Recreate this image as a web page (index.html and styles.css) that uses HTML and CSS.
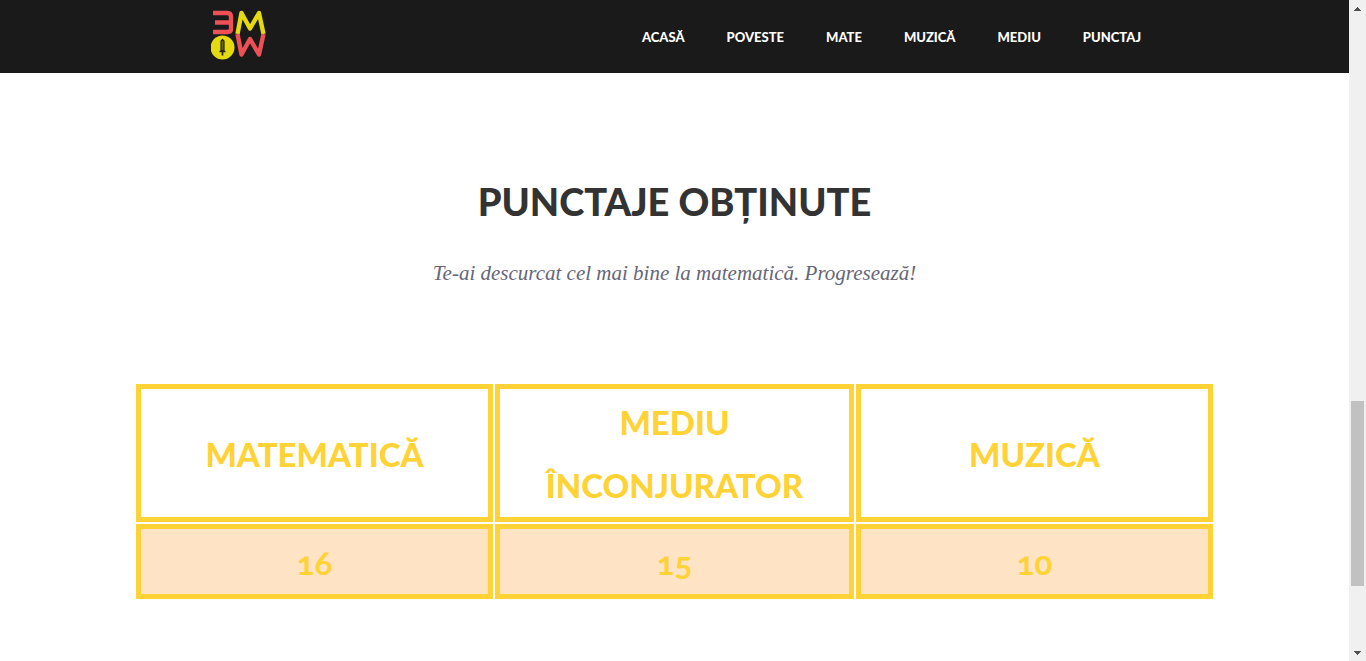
FILE: index.html
```html
<!DOCTYPE html>
<html lang="ro">
<head>
  <meta charset="utf-8">
  <meta name="viewport" content="width=device-width, initial-scale=1">
  <title>Punctaje obținute</title>
  <link rel="stylesheet" href="styles.css">
</head>
<body>
  <div class="page">
    <header class="header">
      <a class="logo" href="#acasa" aria-label="Acasă">
        <svg class="logo-mark" viewBox="0 0 56 56" aria-hidden="true">
          <g fill="none" stroke-linejoin="round" stroke-width="4.400">
            <path d="M2 5H16.500Q20 5 20 9V21Q20 24 16.500 24H2M4 14.500H20" stroke="#ed5055"/>
            <path d="M26.500 26L30.500 5L39 20.500L48 5L52.500 26" stroke="#e5d90f"/>
            <path d="M26.500 26L30.500 46.500L39 31L48 46.500L52.500 26" stroke="#ed5055"/>
          </g>
          <circle cx="11.500" cy="39.500" r="12" fill="#e5d90f"/>
          <path d="M11.500 31.500L13 33V42.500H10V33Z" fill="#6b6613" stroke="#252313" stroke-width="1.200"/>
          <path d="M8.500 43.500H14.500M11.500 43.500V47.500" stroke="#252313" stroke-width="1.700"/>
        </svg>
      </a>
      <nav class="nav">
        <a href="#acasa">ACASĂ</a>
        <a href="#poveste">POVESTE</a>
        <a href="#mate">MATE</a>
        <a href="#muzica">MUZICĂ</a>
        <a href="#mediu">MEDIU</a>
        <a href="#punctaj">PUNCTAJ</a>
      </nav>
    </header>
    <main class="scores" id="punctaj">
      <h1 class="title">PUNCTAJE OBȚINUTE</h1>
      <p class="subtitle">Te-ai descurcat cel mai bine la matematică. Progresează!</p>
      <table class="table">
        <colgroup><col class="col-side"><col class="col-middle"><col class="col-side"></colgroup>
        <thead>
          <tr><th scope="col">MATEMATICĂ</th><th scope="col">MEDIU ÎNCONJURATOR</th><th scope="col">MUZICĂ</th></tr>
        </thead>
        <tbody>
          <tr><td>16</td><td>15</td><td>10</td></tr>
        </tbody>
      </table>
    </main>
  </div>
  <div class="scrollbar" aria-hidden="true">
    <svg class="arrow" viewBox="0 0 17 17"><path d="M5 11V10H6V9H7V8H8V7H9V8H10V9H11V10H12V11Z"/></svg>
    <div class="track"><div class="thumb"></div></div>
    <svg class="arrow" viewBox="0 0 17 17"><path d="M5 7V8H6V9H7V10H8V11H9V10H10V9H11V8H12V7Z"/></svg>
  </div>
</body>
</html>
```
FILE: styles.css
```css
* {
  box-sizing: border-box;
}

body {
  display: grid;
  grid-template-columns: 1fr 17px;
  min-height: 100vh;
  margin: 0;
  background: #fff;
  font-family: Lato, "Noto Sans", sans-serif;
}

.header {
  display: flex;
  align-items: center;
  justify-content: space-between;
  padding: 8px 208px 9px 211px;
  background: #1a1a1a;
}

.logo {
  display: block;
}

.logo-mark {
  display: block;
  width: 56px;
  height: 56px;
}

.nav {
  display: flex;
  gap: 42px;
  padding-top: 2px;
}

.nav a {
  color: #fff;
  font-size: 13px;
  font-weight: 900;
  line-height: 20px;
  text-decoration: none;
}

.scores {
  padding: 94px 134px 60px;
  text-align: center;
}

.title {
  margin: 0;
  color: #333;
  font-size: 38px;
  font-weight: 900;
  line-height: 68px;
}

.subtitle {
  margin: 22px 0 93px;
  color: #666677;
  font-family: "Liberation Serif", serif;
  font-size: 21px;
  font-style: italic;
  font-weight: 400;
  line-height: 32px;
}

.table {
  width: 100%;
  table-layout: fixed;
  border-collapse: separate;
  border-spacing: 2px;
  color: #ffd235;
  font-size: 33px;
  font-variant-numeric: oldstyle-nums;
  line-height: 63px;
}

.col-side {
  width: 357px;
}

.col-middle {
  width: 359px;
}

.table th,
.table td {
  padding: 2px 1px 0;
  border: 5px solid #ffd235;
}

.table th {
  font-weight: 900;
}

.table td {
  background: #fee3c4;
  font-weight: 700;
}

.scrollbar {
  display: grid;
  grid-template-rows: 17px 1fr 17px;
  background: #f0f0f0;
}

.arrow {
  display: block;
  width: 17px;
  height: 17px;
  fill: #505050;
}

.track {
  display: grid;
  grid-template-rows: 384fr 185fr 58fr;
  padding: 0 2px;
}

.thumb {
  grid-row: 2;
  background: #c1c1c1;
}
```
